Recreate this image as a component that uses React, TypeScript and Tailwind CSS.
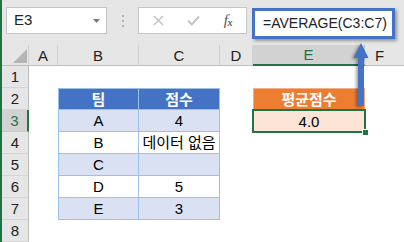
import React from "react";

const FONT = '"Liberation Sans", "Noto Sans CJK KR", Arial, sans-serif';

type RowProps = {
  n: number;
  b?: React.ReactNode;
  c?: React.ReactNode;
  kind?: "none" | "head" | "band" | "plain";
  e?: "none" | "head" | "value";
  selected?: boolean;
};

function Row({ n, b, c, kind = "none", e = "none", selected }: RowProps) {
  const tableBg =
    kind === "head"
      ? "bg-[#4472c4] text-white font-bold"
      : kind === "band"
      ? "bg-[#d9e1f2] text-black"
      : "bg-white text-black";
  const top = kind === "head" ? "border-t" : "";
  return (
    <div className="grid grid-cols-[27px_29px_81px_81px_33px_112px_1fr] h-[22px] text-[15px] leading-none">
      <div
        className={
          selected
            ? "flex items-center justify-center bg-[#d2d2d2] text-[#217346] border-b border-[#c8c8c8] border-r-2 border-r-[#217346]"
            : "flex items-center justify-center bg-[#e6e6e6] text-[#222] border-b border-[#d4d4d4] border-r border-r-[#bdbdbd]"
        }
      >
        {n}
      </div>
      <div className="bg-white" />
      {kind === "none" ? (
        <>
          <div className="bg-white" />
          <div className="bg-white" />
        </>
      ) : (
        <>
          <div
            className={`flex items-center justify-center border-l border-r border-b border-[#9bc2e6] ${top} ${tableBg}`}
          >
            {b}
          </div>
          <div
            className={`flex items-center justify-center whitespace-nowrap border-r border-b border-[#9bc2e6] ${top} ${tableBg}`}
          >
            {c}
          </div>
        </>
      )}
      <div className="bg-white" />
      {e === "head" ? (
        <div className="flex items-center justify-center bg-[#ed7d31] text-white font-bold border border-[#f4b084]">
          평균점수
        </div>
      ) : e === "value" ? (
        <div className="relative flex items-center justify-center bg-[#fce4d6] text-black">
          4.0
          <div className="absolute -inset-[1px] border-2 border-[#217346]" />
          <div className="absolute -right-[4px] -bottom-[4px] w-[7px] h-[7px] bg-[#217346] border border-white" />
        </div>
      ) : (
        <div className="bg-white" />
      )}
      <div className="bg-white" />
    </div>
  );
}

export default function App() {
  return (
    <div
      className="relative w-[404px] h-[242px] overflow-hidden flex bg-white"
      style={{ fontFamily: FONT }}
    >
      <div className="w-[2px] shrink-0 bg-[#217346]" />
      <div className="flex-1 flex flex-col">
        {/* toolbar */}
        <div className="h-[45px] bg-[#e6e6e6] flex items-start pt-[7px]">
          <div className="ml-[4px] w-[101px] h-[27px] bg-white border border-[#c6c6c6] flex items-center justify-between pl-[7px] pr-[6px] text-[15px] text-[#222]">
            <span>E3</span>
            <svg width="7" height="4" viewBox="0 0 7 4">
              <path d="M0 0 L7 0 L3.5 4 Z" fill="#7a7a7a" />
            </svg>
          </div>
          <div className="w-[31px] h-[27px] flex flex-col items-center justify-center gap-[3px]">
            <div className="w-[2px] h-[2px] bg-[#b4b4b4]" />
            <div className="w-[2px] h-[2px] bg-[#b4b4b4]" />
            <div className="w-[2px] h-[2px] bg-[#b4b4b4]" />
          </div>
          <div className="w-[109px] h-[27px] bg-white border border-[#c6c6c6] flex items-center">
            <div className="w-[38px] flex justify-center pl-[2px]">
              <svg width="11" height="11" viewBox="0 0 11 11">
                <path d="M1 1 L10 10 M10 1 L1 10" stroke="#c4c4c4" strokeWidth="1.6" />
              </svg>
            </div>
            <div className="w-[34px] flex justify-center">
              <svg width="13" height="11" viewBox="0 0 13 11">
                <path d="M1 5.5 L4.8 9.5 L12 1.5" stroke="#c4c4c4" strokeWidth="2" fill="none" />
              </svg>
            </div>
            <div
              className="w-[36px] flex justify-center items-end italic text-[#555] text-[15px] leading-none"
              style={{ fontFamily: '"Liberation Serif", serif' }}
            >
              <span>f</span>
              <span className="text-[10px] font-bold -ml-[0.5px]">x</span>
            </div>
          </div>
          <div className="ml-[5px] mt-[1px] w-[143px] h-[31px] bg-white border-[3px] border-[#4472c4] shadow-[2px_2px_3px_rgba(0,0,0,0.35)] flex items-center pl-[8px] text-[14px] text-[#222] whitespace-nowrap">
            =AVERAGE(C3:C7)
          </div>
        </div>
        {/* column headers */}
        <div className="grid grid-cols-[27px_29px_81px_81px_33px_112px_1fr] h-[21px] bg-[#e6e6e6] text-[15px] leading-none text-[#222]">
          <div className="relative border-r border-[#d0d0d0] border-b border-b-[#bdbdbd]">
            <svg className="absolute left-[11px] top-[4px]" width="14" height="14" viewBox="0 0 14 14">
              <path d="M14 0 L14 14 L0 14 Z" fill="#b4b4b4" />
            </svg>
          </div>
          <div className="flex items-center justify-center border-r border-[#d0d0d0] border-b border-b-[#bdbdbd]">A</div>
          <div className="flex items-center justify-center border-r border-[#d0d0d0] border-b border-b-[#bdbdbd]">B</div>
          <div className="flex items-center justify-center border-r border-[#d0d0d0] border-b border-b-[#bdbdbd]">C</div>
          <div className="flex items-center justify-center border-r border-[#d0d0d0] border-b border-b-[#bdbdbd]">D</div>
          <div className="flex items-center justify-center bg-[#d2d2d2] text-[#217346] border-b-2 border-[#217346] border-r border-r-[#c0c0c0]">E</div>
          <div className="flex items-center justify-center border-b border-b-[#bdbdbd] pr-[10px]">F</div>
        </div>
        <Row n={1} />
        <Row n={2} kind="head" b="팀" c="점수" e="head" />
        <Row n={3} kind="band" b="A" c="4" e="value" selected />
        <Row n={4} kind="plain" b="B" c="데이터 없음" />
        <Row n={5} kind="band" b="C" c="" />
        <Row n={6} kind="plain" b="D" c="5" />
        <Row n={7} kind="band" b="E" c="3" />
        <Row n={8} />
      </div>
      {/* arrow */}
      <svg
        className="absolute left-[350px] top-[41px]"
        width="22"
        height="68"
        viewBox="0 0 22 68"
        style={{ filter: "drop-shadow(-1.5px 1.5px 1.5px rgba(0,0,0,0.35))" }}
      >
        <path d="M11 2 L18.5 17 L14 17 L14 65 L8 65 L8 17 L3.5 17 Z" fill="#4472c4" />
      </svg>
    </div>
  );
}
